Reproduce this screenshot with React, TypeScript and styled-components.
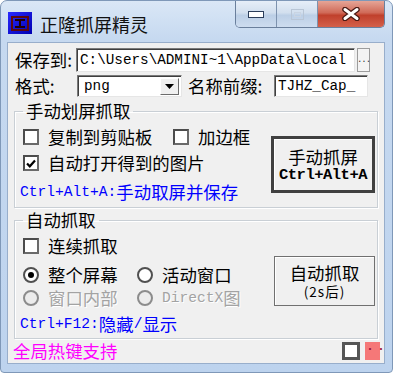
import React from 'react';
import styled, { createGlobalStyle } from 'styled-components';

const cjk = `"Noto Sans CJK SC", "Liberation Sans", sans-serif`;
const mono = `"Liberation Mono", "Noto Sans CJK SC", monospace`;

const GlobalStyle = createGlobalStyle`
  html, body {
    margin: 0;
    padding: 0;
    background: #fff;
  }
  body {
    font-family: ${cjk};
    color: #000;
  }
`;

const Window = styled.div`
  width: 393px;
  height: 373px;
  box-sizing: border-box;
  border: 1px solid #7f98b8;
  border-radius: 7px 7px 4px 4px;
  background: linear-gradient(#dae7f6, #c6d9f0 38px, #bdd3ee);
  display: flex;
  flex-direction: column;
  padding: 0 7px 8px 6px;
`;

const TitleBar = styled.div`
  height: 41px;
  display: flex;
  align-items: flex-start;
  flex-shrink: 0;
`;

const AppIcon = styled.svg`
  margin: 11px 0 0 1px;
  flex-shrink: 0;
`;

const Title = styled.div`
  margin: 12px 0 0 8px;
  font-size: 18px;
  line-height: 22px;
  color: #111;
`;

const Caption = styled.div`
  margin-left: auto;
  display: flex;
  height: 26px;
  border: 1px solid #6a7f9c;
  border-top: none;
  border-radius: 0 0 5px 5px;
  overflow: hidden;
`;

const CapButton = styled.div<{ $w: number; $close?: boolean }>`
  width: ${p => p.$w}px;
  display: flex;
  align-items: center;
  justify-content: center;
  border-right: ${p => (p.$close ? 'none' : '1px solid #7d92ae')};
  background: ${p =>
    p.$close
      ? 'linear-gradient(#e6a597, #d06a58 45%, #c0402c 55%, #d4604a)'
      : 'linear-gradient(#e6eef8, #d2dfee 45%, #bccfe6 55%, #cddcef)'};
`;

const Client = styled.div`
  flex: 1;
  background: #f0f0f0;
  border: 1px solid #98aecb;
  display: flex;
  flex-direction: column;
  padding-top: 5px;
`;

const FormRow = styled.div<{ $top?: number; $h: number }>`
  display: flex;
  align-items: center;
  height: ${p => p.$h}px;
  margin: ${p => p.$top ?? 0}px 0 0 7px;
`;

const Label = styled.div<{ $w: number; $left?: number }>`
  width: ${p => p.$w}px;
  margin-left: ${p => p.$left ?? 0}px;
  font-size: 17.4px;
  line-height: 20px;
  white-space: nowrap;
  flex-shrink: 0;
`;

const TextBox = styled.div<{ $w: number }>`
  width: ${p => p.$w}px;
  height: 100%;
  box-sizing: border-box;
  background: #fff;
  border: 1px solid;
  border-color: #7a7a7a #e6e6e6 #e6e6e6 #7a7a7a;
  box-shadow: inset 1px 1px 0 #3f3f3f;
  display: flex;
  align-items: center;
  padding-left: 3px;
  font-family: ${mono};
  font-size: 14.3px;
  white-space: nowrap;
  overflow: hidden;
  flex-shrink: 0;
`;

const Browse = styled.div`
  width: 13px;
  height: 100%;
  margin-left: 2px;
  box-sizing: border-box;
  border: 1px solid #9c9c9c;
  background: #f4f4f4;
  font-family: ${mono};
  font-size: 9px;
  line-height: 9px;
  display: flex;
  align-items: flex-end;
  justify-content: center;
  padding-bottom: 6px;
  color: #333;
  letter-spacing: -1px;
`;

const SelectBox = styled(TextBox)`
  padding: 0 2px 0 6px;
  justify-content: space-between;
`;

const DropArrow = styled.div`
  width: 19px;
  height: 17px;
  box-sizing: border-box;
  background: #f0f0f0;
  border: 1px solid;
  border-color: #fff #6c6c6c #6c6c6c #fff;
  display: flex;
  align-items: center;
  justify-content: center;
`;

const Group = styled.fieldset<{ $top: number }>`
  margin: ${p => p.$top}px 6px 0 6px;
  border: 1px solid #c9cfd5;
  box-shadow: inset 1px 1px 0 #fff, 1px 1px 0 #fff;
  padding: 0 2px 0 8px;
  min-width: 0;
  display: grid;
  grid-template-columns: 1fr auto;
`;

const Legend = styled.legend`
  padding: 0 3px;
  font-size: 17.4px;
  line-height: 18px;
`;

const Column = styled.div<{ $pad: string }>`
  display: flex;
  flex-direction: column;
  padding: ${p => p.$pad};
`;

const OptRow = styled.div<{ $top?: number; $h: number }>`
  display: flex;
  align-items: center;
  height: ${p => p.$h}px;
  margin-top: ${p => p.$top ?? 0}px;
`;

const Option = styled.div<{ $w?: number; $disabled?: boolean }>`
  display: flex;
  align-items: center;
  width: ${p => (p.$w ? `${p.$w}px` : 'auto')};
  font-size: 17.4px;
  line-height: 20px;
  white-space: nowrap;
  color: ${p => (p.$disabled ? '#a3a3a3' : '#000')};
  text-shadow: ${p => (p.$disabled ? '1px 1px 0 #fff' : 'none')};
`;

const Check = styled.span`
  width: 16px;
  height: 16px;
  box-sizing: border-box;
  border: 2px solid;
  border-color: #4c4c4c #6a6a6a #6a6a6a #4c4c4c;
  background: #fff;
  margin-right: 9px;
  display: flex;
  align-items: center;
  justify-content: center;
  flex-shrink: 0;
`;

const Radio = styled.span<{ $disabled?: boolean }>`
  width: 16px;
  height: 16px;
  box-sizing: border-box;
  border-radius: 50%;
  border: 2px solid ${p => (p.$disabled ? '#8c8c8c' : '#505050')};
  background: ${p => (p.$disabled ? '#ececec' : '#fff')};
  margin-right: 9px;
  display: flex;
  align-items: center;
  justify-content: center;
  flex-shrink: 0;
`;

const Dot = styled.span`
  width: 6px;
  height: 6px;
  border-radius: 50%;
  background: #000;
`;

const Hint = styled.div<{ $top: number }>`
  margin: ${p => p.$top}px 0 0 -3px;
  height: 20px;
  display: flex;
  align-items: center;
  color: #0000ff;
  font-size: 17.4px;
  line-height: 20px;
  white-space: nowrap;
`;

const Mono = styled.span`
  font-family: ${mono};
  font-size: 14.6px;
`;

const PushButton = styled.div<{ $w: number; $h: number; $top: number; $default?: boolean }>`
  width: ${p => p.$w}px;
  height: ${p => p.$h}px;
  margin: ${p => p.$top}px 0 0 0;
  box-sizing: border-box;
  border: ${p => (p.$default ? '3px solid #404040' : '1px solid #707070')};
  box-shadow: inset 1px 1px 0 #fff;
  background: #f0f0f0;
  display: flex;
  flex-direction: column;
  align-items: center;
  justify-content: center;
`;

const MainLine = styled.span`
  font-size: 17.4px;
  line-height: 20px;
`;

const SubLine = styled.span<{ $mono?: boolean }>`
  font-family: ${p => (p.$mono ? mono : cjk)};
  font-size: ${p => (p.$mono ? '15.5px' : '13.5px')};
  letter-spacing: ${p => (p.$mono ? '-0.5px' : '1px')};
  font-weight: ${p => (p.$mono ? 'bold' : 'normal')};
  line-height: 16px;
`;

const StatusRow = styled.div`
  display: flex;
  align-items: center;
  height: 18px;
  margin-top: 3px;
  padding: 0 4px 0 5px;
`;

const HotkeyText = styled.div`
  color: #ff00ff;
  font-size: 17.4px;
  line-height: 18px;
  margin-right: auto;
`;

const PinBox = styled.div`
  width: 18px;
  height: 18px;
  box-sizing: border-box;
  border: 3px solid #555;
  background: #fff;
`;

const ColorBox = styled.div`
  width: 15px;
  height: 18px;
  margin-left: 5px;
  background: #f57878;
  color: #9a1040;
  font-size: 10px;
  line-height: 14px;
  text-align: center;
  letter-spacing: 1px;
`;

const CheckMark = () => (
  <svg width="10" height="9" viewBox="0 0 10 9">
    <path d="M1 4.5 L3.8 7.3 L9 1.5" fill="none" stroke="#000" strokeWidth="2.2" />
  </svg>
);

export default function App() {
  return (
    <>
      <GlobalStyle />
      <Window>
        <TitleBar>
          <AppIcon width="24" height="22" viewBox="0 0 24 22">
            <defs>
              <linearGradient id="ig" x1="0" y1="0" x2="1" y2="1">
                <stop offset="0" stopColor="#2a2aff" />
                <stop offset="1" stopColor="#0000b0" />
              </linearGradient>
            </defs>
            <rect x="0" y="0" width="24" height="22" fill="url(#ig)" />
            <rect x="4" y="5" width="16" height="13" fill="none" stroke="#5a0a10" strokeWidth="2" />
            <path d="M7 8 H17 M12 8 V15 M7 15 H17" stroke="#200008" strokeWidth="2" />
          </AppIcon>
          <Title>正隆抓屏精灵</Title>
          <Caption>
            <CapButton $w={40}>
              <svg width="16" height="7" viewBox="0 0 16 7">
                <rect x="0.5" y="0.5" width="15" height="6" fill="#fff" stroke="#2c3e5a" />
              </svg>
            </CapButton>
            <CapButton $w={40}>
              <svg width="13" height="11" viewBox="0 0 13 11">
                <rect x="0.5" y="0.5" width="12" height="10" fill="none" stroke="#b9c6d6" />
                <rect x="3.5" y="3.5" width="6" height="4" fill="none" stroke="#c9d4e2" />
              </svg>
            </CapButton>
            <CapButton $w={66} $close>
              <svg width="18" height="14" viewBox="0 0 18 14">
                <path d="M3 2.5 L15 11.5 M15 2.5 L3 11.5" stroke="#4a1a14" strokeWidth="5.5" strokeLinecap="round" />
                <path d="M3 2.5 L15 11.5 M15 2.5 L3 11.5" stroke="#fff" strokeWidth="3" strokeLinecap="round" />
              </svg>
            </CapButton>
          </Caption>
        </TitleBar>

        <Client>
          <FormRow $h={24}>
            <Label $w={61}>保存到:</Label>
            <TextBox $w={279}>C:\Users\ADMINI~1\AppData\Local</TextBox>
            <Browse>...</Browse>
          </FormRow>
          <FormRow $h={22} $top={3}>
            <Label $w={62}>格式:</Label>
            <SelectBox $w={105}>
              <span>png</span>
              <DropArrow>
                <svg width="9" height="5" viewBox="0 0 9 5">
                  <path d="M0 0 H9 L4.5 5 Z" fill="#000" />
                </svg>
              </DropArrow>
            </SelectBox>
            <Label $w={86} $left={6}>名称前缀:</Label>
            <TextBox $w={94}>TJHZ_Cap_</TextBox>
          </FormRow>

          <Group $top={5}>
            <Legend>手动划屏抓取</Legend>
            <Column $pad="4px 0 5px 0">
              <OptRow $h={26}>
                <Option $w={150}>
                  <Check />
                  复制到剪贴板
                </Option>
                <Option>
                  <Check />
                  加边框
                </Option>
              </OptRow>
              <OptRow $h={26}>
                <Option>
                  <Check>
                    <CheckMark />
                  </Check>
                  自动打开得到的图片
                </Option>
              </OptRow>
              <Hint $top={6}>
                <Mono>Ctrl+Alt+A:</Mono>手动取屏并保存
              </Hint>
            </Column>
            <PushButton $w={104} $h={57} $top={16} $default>
              <MainLine>手动抓屏</MainLine>
              <SubLine $mono>Ctrl+Alt+A</SubLine>
            </PushButton>
          </Group>

          <Group $top={3}>
            <Legend>自动抓取</Legend>
            <Column $pad="6px 0 4px 0">
              <OptRow $h={22}>
                <Option>
                  <Check />
                  连续抓取
                </Option>
              </OptRow>
              <OptRow $h={22} $top={7}>
                <Option $w={114}>
                  <Radio>
                    <Dot />
                  </Radio>
                  整个屏幕
                </Option>
                <Option>
                  <Radio />
                  活动窗口
                </Option>
              </OptRow>
              <OptRow $h={22} $top={1}>
                <Option $w={114} $disabled>
                  <Radio $disabled />
                  窗口内部
                </Option>
                <Option $disabled>
                  <Radio $disabled />
                  <Mono>DirectX</Mono>图
                </Option>
              </OptRow>
              <Hint $top={5}>
                <Mono>Ctrl+F12:</Mono>隐藏<Mono>/</Mono>显示
              </Hint>
            </Column>
            <PushButton $w={101} $h={50} $top={27}>
              <MainLine>自动抓取</MainLine>
              <SubLine>(2s后)</SubLine>
            </PushButton>
          </Group>

          <StatusRow>
            <HotkeyText>全局热键支持</HotkeyText>
            <PinBox />
            <ColorBox>··</ColorBox>
          </StatusRow>
        </Client>
      </Window>
    </>
  );
}
